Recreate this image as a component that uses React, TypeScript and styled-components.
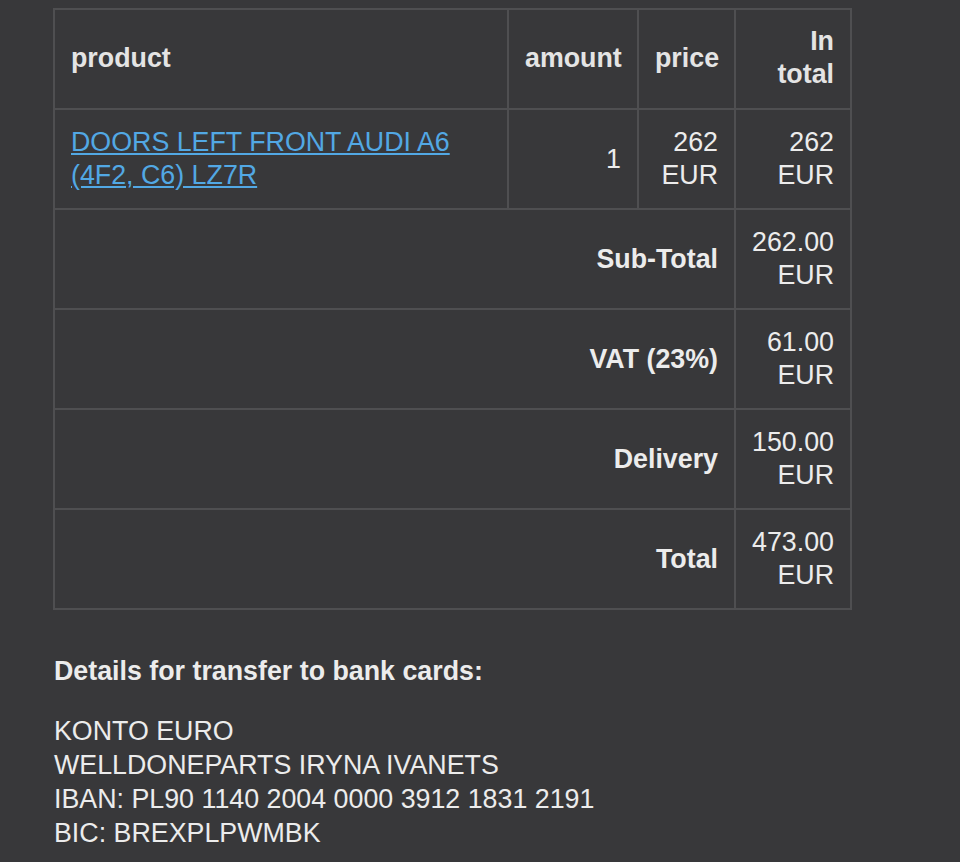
import React from "react";
import styled, { createGlobalStyle } from "styled-components";

const Global = createGlobalStyle`
  html, body { margin: 0; padding: 0; background: #38383a; }
  body { font-family: "Liberation Sans", Arial, sans-serif; color: #ececec; }
`;

const Page = styled.div`
  padding: 8px 0 0 53px;
  width: 799px;
  font-size: 26.8px;
  line-height: 33px;
`;

const Table = styled.table`
  width: 799px;
  border-collapse: collapse;
  table-layout: fixed;
  border: 2px solid #4f4f51;
`;

const Th = styled.th<{ $align?: string; $w?: number }>`
  width: ${(p) => (p.$w ? `${p.$w}px` : "auto")};
  height: 66px;
  padding: 15px 16px 17px;
  border: 2px solid #4f4f51;
  text-align: ${(p) => p.$align || "right"};
  vertical-align: middle;
  font-weight: bold;
  color: #e4e4e4;
`;

const Td = styled.td<{ $align?: string; $bold?: boolean }>`
  height: 66px;
  padding: 16px 16px;
  border: 2px solid #4f4f51;
  text-align: ${(p) => p.$align || "right"};
  vertical-align: middle;
  font-weight: ${(p) => (p.$bold ? "bold" : "normal")};
  color: #ececec;
`;

const Link = styled.a`
  color: #52a8e4;
  text-decoration: underline;
`;

const Details = styled.div`
  margin-top: 44px;
  padding-left: 1px;
  line-height: 34px;
`;

const DetailsTitle = styled.div`
  font-weight: bold;
  margin-bottom: 26px;
`;

const Line = styled.div``;

const summary = [
  ["Sub-Total", "262.00"],
  ["VAT (23%)", "61.00"],
  ["Delivery", "150.00"],
  ["Total", "473.00"],
];

export default function App() {
  return (
    <>
      <Global />
      <Page>
        <Table>
          <thead>
            <tr>
              <Th $align="left">product</Th>
              <Th $w={96}>amount</Th>
              <Th $w={63}>price</Th>
              <Th $w={82}>In total</Th>
            </tr>
          </thead>
          <tbody>
            <tr>
              <Td $align="left">
                <Link href="#">DOORS LEFT FRONT AUDI A6 (4F2, C6) LZ7R</Link>
              </Td>
              <Td>1</Td>
              <Td>262 EUR</Td>
              <Td>262 EUR</Td>
            </tr>
            {summary.map(([label, value]) => (
              <tr key={label}>
                <Td colSpan={3} $bold>
                  {label}
                </Td>
                <Td>{value} EUR</Td>
              </tr>
            ))}
          </tbody>
        </Table>
        <Details>
          <DetailsTitle>Details for transfer to bank cards:</DetailsTitle>
          <Line>KONTO EURO</Line>
          <Line>WELLDONEPARTS IRYNA IVANETS</Line>
          <Line>IBAN: PL90 1140 2004 0000 3912 1831 2191</Line>
          <Line>BIC: BREXPLPWMBK</Line>
        </Details>
      </Page>
    </>
  );
}
